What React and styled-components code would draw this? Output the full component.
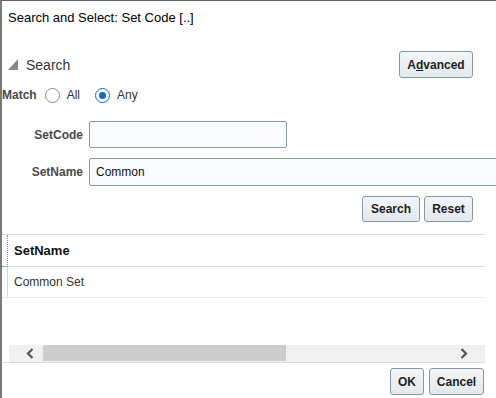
import React from 'react';
import styled, { createGlobalStyle } from 'styled-components';

const GlobalStyle = createGlobalStyle`
  html, body {
    margin: 0;
    padding: 0;
    background: #fff;
  }
  body {
    font-family: "Liberation Sans", Arial, sans-serif;
  }
`;

const Dialog = styled.div`
  width: 496px;
  height: 398px;
  box-sizing: border-box;
  border-top: 1px solid #5f5f5f;
  border-left: 2px solid #7a7a7a;
  overflow: hidden;
  display: flex;
  flex-direction: column;
  background: #fff;
`;

const Title = styled.div`
  height: 33px;
  box-sizing: border-box;
  padding: 9px 0 0 6px;
  font-size: 13px;
  line-height: 15px;
  color: #000;
`;

const SearchHeader = styled.div`
  margin-top: 17px;
  height: 27px;
  display: flex;
  align-items: center;
  justify-content: space-between;
  padding: 0 23px 0 6px;
`;

const HeaderTitle = styled.div`
  display: flex;
  align-items: center;
  gap: 8px;
  font-size: 14px;
  color: #333;
`;

const Button = styled.button`
  height: ${(p) => p.$h || 26}px;
  width: ${(p) => p.$w}px;
  box-sizing: border-box;
  padding: 0;
  border: 1px solid #8797a5;
  border-radius: 3px;
  background: linear-gradient(#f4f6f8, #e3e8ec);
  font-family: "Liberation Sans", Arial, sans-serif;
  font-weight: bold;
  font-size: 12px;
  color: #1e1e1e;
  u {
    text-decoration: underline;
  }
`;

const MatchRow = styled.div`
  margin-top: 8px;
  height: 18px;
  display: flex;
  align-items: center;
  font-size: 12px;
  color: #333;
`;

const MatchLabel = styled.span`
  font-weight: bold;
  color: #4a4a4a;
  margin-right: 8px;
`;

const RadioItem = styled.label`
  display: flex;
  align-items: center;
  gap: 7px;
  margin-right: ${(p) => p.$mr || 0}px;
  font-size: 12px;
  color: #333;
`;

const RadioCircle = styled.span`
  width: 15px;
  height: 15px;
  box-sizing: border-box;
  border-radius: 50%;
  border: 1px solid ${(p) => (p.$on ? '#0a6fc9' : '#8a8a8a')};
  background: #fff;
  display: flex;
  align-items: center;
  justify-content: center;
  &::after {
    content: '';
    display: ${(p) => (p.$on ? 'block' : 'none')};
    width: 7px;
    height: 7px;
    border-radius: 50%;
    background: #0a6fc9;
  }
`;

const FieldGrid = styled.div`
  margin-top: 17px;
  display: grid;
  grid-template-columns: 81px auto;
  column-gap: 6px;
  row-gap: 10px;
  align-items: center;
`;

const FieldLabel = styled.label`
  text-align: right;
  font-size: 12px;
  font-weight: bold;
  color: #4a4a4a;
`;

const Input = styled.div`
  width: ${(p) => p.$w}px;
  height: ${(p) => p.$h}px;
  box-sizing: border-box;
  border: 1px solid #8b9aa6;
  border-radius: 2px;
  background: #fafbfd;
  padding-left: 6px;
  display: flex;
  align-items: center;
  font-size: 12px;
  color: #111;
`;

const ButtonRow = styled.div`
  margin-top: ${(p) => p.$mt}px;
  display: flex;
  justify-content: flex-end;
  gap: ${(p) => p.$gap}px;
  padding-right: ${(p) => p.$pr}px;
`;

const Table = styled.div`
  margin-top: 12px;
  width: 483px;
  height: 129px;
  box-sizing: border-box;
  border-top: 1px solid #d5dce3;
  border-bottom: 1px solid #d5dce3;
  display: flex;
  flex-direction: column;
`;

const Row = styled.div`
  display: flex;
  height: ${(p) => p.$h}px;
  box-sizing: border-box;
  border-bottom: 1px solid ${(p) => (p.$head ? '#d5dce3' : '#e6e9ec')};
`;

const Gutter = styled.div`
  width: 6px;
  box-sizing: border-box;
  border-right: 1px ${(p) => (p.$head ? 'dotted #8a8a8a' : 'solid #d5dce3')};
  ${(p) => p.$head && 'border-bottom: 1px dotted #8a8a8a; margin-bottom: -1px;'}
`;

const Cell = styled.div`
  padding-left: 6px;
  display: flex;
  align-items: center;
  font-size: ${(p) => (p.$head ? 13 : 12)}px;
  font-weight: ${(p) => (p.$head ? 'bold' : 'normal')};
  color: ${(p) => (p.$head ? '#111' : '#333')};
`;

const Spacer = styled.div`
  flex: 1;
`;

const Scrollbar = styled.div`
  margin-left: 7px;
  height: 17px;
  display: flex;
  align-items: stretch;
  background: #f0f0f0;
`;

const ScrollArrow = styled.div`
  width: 34px;
  box-sizing: border-box;
  padding: ${(p) => (p.$side === 'left' ? '0 0 0 8px' : '0 8px 0 0')};
  display: flex;
  align-items: center;
  justify-content: center;
  color: #555;
`;

const Thumb = styled.div`
  width: 243px;
  margin-bottom: 1px;
  background: #cdcdcd;
`;

const Chevron = ({ dir }) => (
  <svg width="8" height="11" viewBox="0 0 8 11">
    <path
      d={dir === 'left' ? 'M6.5 1 L2 5.5 L6.5 10' : 'M1.5 1 L6 5.5 L1.5 10'}
      fill="none"
      stroke="#555"
      strokeWidth="2.2"
    />
  </svg>
);

const App = () => {
  return (
    <>
      <GlobalStyle />
      <Dialog>
        <Title>Search and Select: Set Code [..]</Title>
        <SearchHeader>
          <HeaderTitle>
            <svg width="10" height="11" viewBox="0 0 10 11">
              <polygon points="10,0 10,11 0,11" fill="#878a8d" />
            </svg>
            Search
          </HeaderTitle>
          <Button $w={74} $h={27}>
            A<u>d</u>vanced
          </Button>
        </SearchHeader>
        <MatchRow>
          <MatchLabel>Match</MatchLabel>
          <RadioItem $mr={15}>
            <RadioCircle />
            All
          </RadioItem>
          <RadioItem>
            <RadioCircle $on />
            Any
          </RadioItem>
        </MatchRow>
        <FieldGrid>
          <FieldLabel>SetCode</FieldLabel>
          <Input $w={198} $h={27} />
          <FieldLabel>SetName</FieldLabel>
          <Input $w={420} $h={28}>Common</Input>
        </FieldGrid>
        <ButtonRow $mt={10} $gap={4} $pr={23}>
          <Button $w={58}>Search</Button>
          <Button $w={49}>Reset</Button>
        </ButtonRow>
        <Table>
          <Row $h={32} $head>
            <Gutter $head />
            <Cell $head>SetName</Cell>
          </Row>
          <Row $h={31}>
            <Gutter />
            <Cell>Common Set</Cell>
          </Row>
          <Spacer />
          <Scrollbar>
            <ScrollArrow $side="left">
              <Chevron dir="left" />
            </ScrollArrow>
            <Thumb />
            <Spacer />
            <ScrollArrow $side="right">
              <Chevron dir="right" />
            </ScrollArrow>
          </Scrollbar>
        </Table>
        <ButtonRow $mt={5} $gap={5} $pr={12}>
          <Button $w={34} $h={27}>OK</Button>
          <Button $w={55} $h={27}>Cancel</Button>
        </ButtonRow>
      </Dialog>
    </>
  );
};

export default App;
